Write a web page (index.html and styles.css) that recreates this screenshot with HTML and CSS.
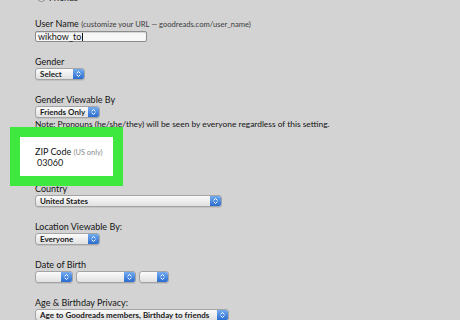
FILE: index.html
```html
<!DOCTYPE html>
<html lang="en">
<head>
    <meta charset="UTF-8">
    <meta name="viewport" content="width=device-width, initial-scale=1.0">
    <title>Edit Profile</title>
    <link rel="stylesheet" href="styles.css">
</head>
<body>
    <div class="profile-form">
        <div class="radio-row"><span class="radio"></span>Friends</div>

        <div class="field first">
            <div class="label">User Name <span class="hint">(customize your URL — goodreads.com/user_name)</span></div>
            <div class="text-input">wikhow_to<span class="caret"></span></div>
        </div>

        <div class="field">
            <div class="label">Gender</div>
            <div class="select short">
                <span class="select-text">Select</span>
                <span class="arrow"><svg viewBox="0 0 11 12"><path d="M3.3 5.2 5.5 3 7.7 5.2M3.3 6.8 5.5 9 7.7 6.8"/></svg></span>
            </div>
        </div>

        <div class="field">
            <div class="label">Gender Viewable By</div>
            <div class="select medium">
                <span class="select-text">Friends Only</span>
                <span class="arrow"><svg viewBox="0 0 11 12"><path d="M3.3 5.2 5.5 3 7.7 5.2M3.3 6.8 5.5 9 7.7 6.8"/></svg></span>
            </div>
            <div class="note">Note: Pronouns (he/she/they) will be seen by everyone regardless of this setting.</div>
        </div>

        <div class="zip-box">
            <div class="label">ZIP Code <span class="hint light">(US only)</span></div>
            <div class="zip-value">03060</div>
        </div>

        <div class="field after-zip">
            <div class="label">Country</div>
            <div class="select wide">
                <span class="select-text">United States</span>
                <span class="arrow"><svg viewBox="0 0 11 12"><path d="M3.3 5.2 5.5 3 7.7 5.2M3.3 6.8 5.5 9 7.7 6.8"/></svg></span>
            </div>
        </div>

        <div class="field">
            <div class="label">Location Viewable By:</div>
            <div class="select medium">
                <span class="select-text">Everyone</span>
                <span class="arrow"><svg viewBox="0 0 11 12"><path d="M3.3 5.2 5.5 3 7.7 5.2M3.3 6.8 5.5 9 7.7 6.8"/></svg></span>
            </div>
        </div>

        <div class="field">
            <div class="label">Date of Birth</div>
            <div class="date-row">
                <div class="select day">
                    <span class="select-text"></span>
                    <span class="arrow"><svg viewBox="0 0 11 12"><path d="M3.3 5.2 5.5 3 7.7 5.2M3.3 6.8 5.5 9 7.7 6.8"/></svg></span>
                </div>
                <div class="select month">
                    <span class="select-text"></span>
                    <span class="arrow"><svg viewBox="0 0 11 12"><path d="M3.3 5.2 5.5 3 7.7 5.2M3.3 6.8 5.5 9 7.7 6.8"/></svg></span>
                </div>
                <div class="select year">
                    <span class="select-text"></span>
                    <span class="arrow"><svg viewBox="0 0 11 12"><path d="M3.3 5.2 5.5 3 7.7 5.2M3.3 6.8 5.5 9 7.7 6.8"/></svg></span>
                </div>
            </div>
        </div>

        <div class="field">
            <div class="label">Age &amp; Birthday Privacy:</div>
            <div class="select full">
                <span class="select-text">Age to Goodreads members, Birthday to friends</span>
                <span class="arrow"><svg viewBox="0 0 11 12"><path d="M3.3 5.2 5.5 3 7.7 5.2M3.3 6.8 5.5 9 7.7 6.8"/></svg></span>
            </div>
        </div>
    </div>
</body>
</html>
```

FILE: styles.css
```css
body {
    margin: 0;
    background: #d3d3d3;
    font-family: Lato, "Liberation Sans", sans-serif;
    color: #141414;
    overflow: hidden;
}
.profile-form {
    padding-left: 35px;
}
.radio-row {
    margin-top: -8px;
    height: 11px;
    line-height: 11px;
    font-size: 9px;
    display: flex;
    align-items: center;
    gap: 3px;
    margin-left: 2px;
}
.radio {
    width: 9px;
    height: 9px;
    box-sizing: border-box;
    border-radius: 50%;
    border: 1px solid #8a8a8a;
    background: linear-gradient(#ffffff, #e2e2e2);
}
.field {
    margin-top: 14px;
}
.field.first {
    margin-top: 15px;
}
.field.after-zip {
    margin-top: 7px;
}
.label {
    height: 11px;
    font-size: 9px;
    line-height: 11px;
    white-space: nowrap;
}
.hint {
    color: #3c3c3c;
    font-size: 7.6px;
    line-height: 1;
}
.hint.light {
    color: #8a8a8a;
    font-size: 7.4px;
}
.text-input {
    margin-top: 2px;
    width: 112px;
    height: 11px;
    box-sizing: border-box;
    border: 1px solid #8c8c8c;
    border-radius: 2px;
    background: #f7f7f7;
    box-shadow: inset 0 1px 1px rgba(0,0,0,0.15);
    font-size: 9px;
    line-height: 9px;
    padding-left: 2px;
    display: flex;
    align-items: center;
}
.caret {
    width: 1px;
    height: 8px;
    background: #111;
    margin-left: 1px;
}
.select {
    margin-top: 1px;
    display: flex;
    height: 12px;
    box-sizing: border-box;
    border: 1px solid #a4a4a4;
    border-radius: 3px;
    background: linear-gradient(#fbfbfb, #e0e0e0);
    box-shadow: 0 1px 0 rgba(0,0,0,0.08);
    overflow: hidden;
}
.select-text {
    flex: 1;
    padding-left: 4px;
    font-size: 8px;
    font-weight: 700;
    line-height: 10px;
    white-space: nowrap;
    overflow: hidden;
    color: #1a1a1a;
}
.arrow {
    width: 11px;
    flex: none;
    background: linear-gradient(#74acef, #2a6cd0);
    display: flex;
}
.arrow svg {
    width: 11px;
    height: 10px;
}
.arrow path {
    fill: none;
    stroke: #fff;
    stroke-width: 1.2;
}
.select.short { width: 50px; }
.select.medium { width: 65px; }
.select.wide { width: 187px; }
.select.full { width: 194px; }
.select.day { width: 38px; }
.select.month { width: 60px; }
.select.year { width: 30px; }
.date-row {
    display: flex;
    gap: 3px;
}
.note {
    margin-top: 1px;
    height: 11px;
    font-size: 8.4px;
    line-height: 11px;
    white-space: nowrap;
}
.zip-box {
    position: relative;
    z-index: 1;
    margin-top: 7px;
    margin-left: -15px;
    width: 93px;
    box-sizing: border-box;
    padding: 9px 0 8px 15px;
    background: #ffffff;
    box-shadow: 0 0 0 10px #3fe83f;
}
.zip-value {
    font-size: 9px;
    line-height: 11px;
    padding-left: 2px;
    color: #222;
}
```
